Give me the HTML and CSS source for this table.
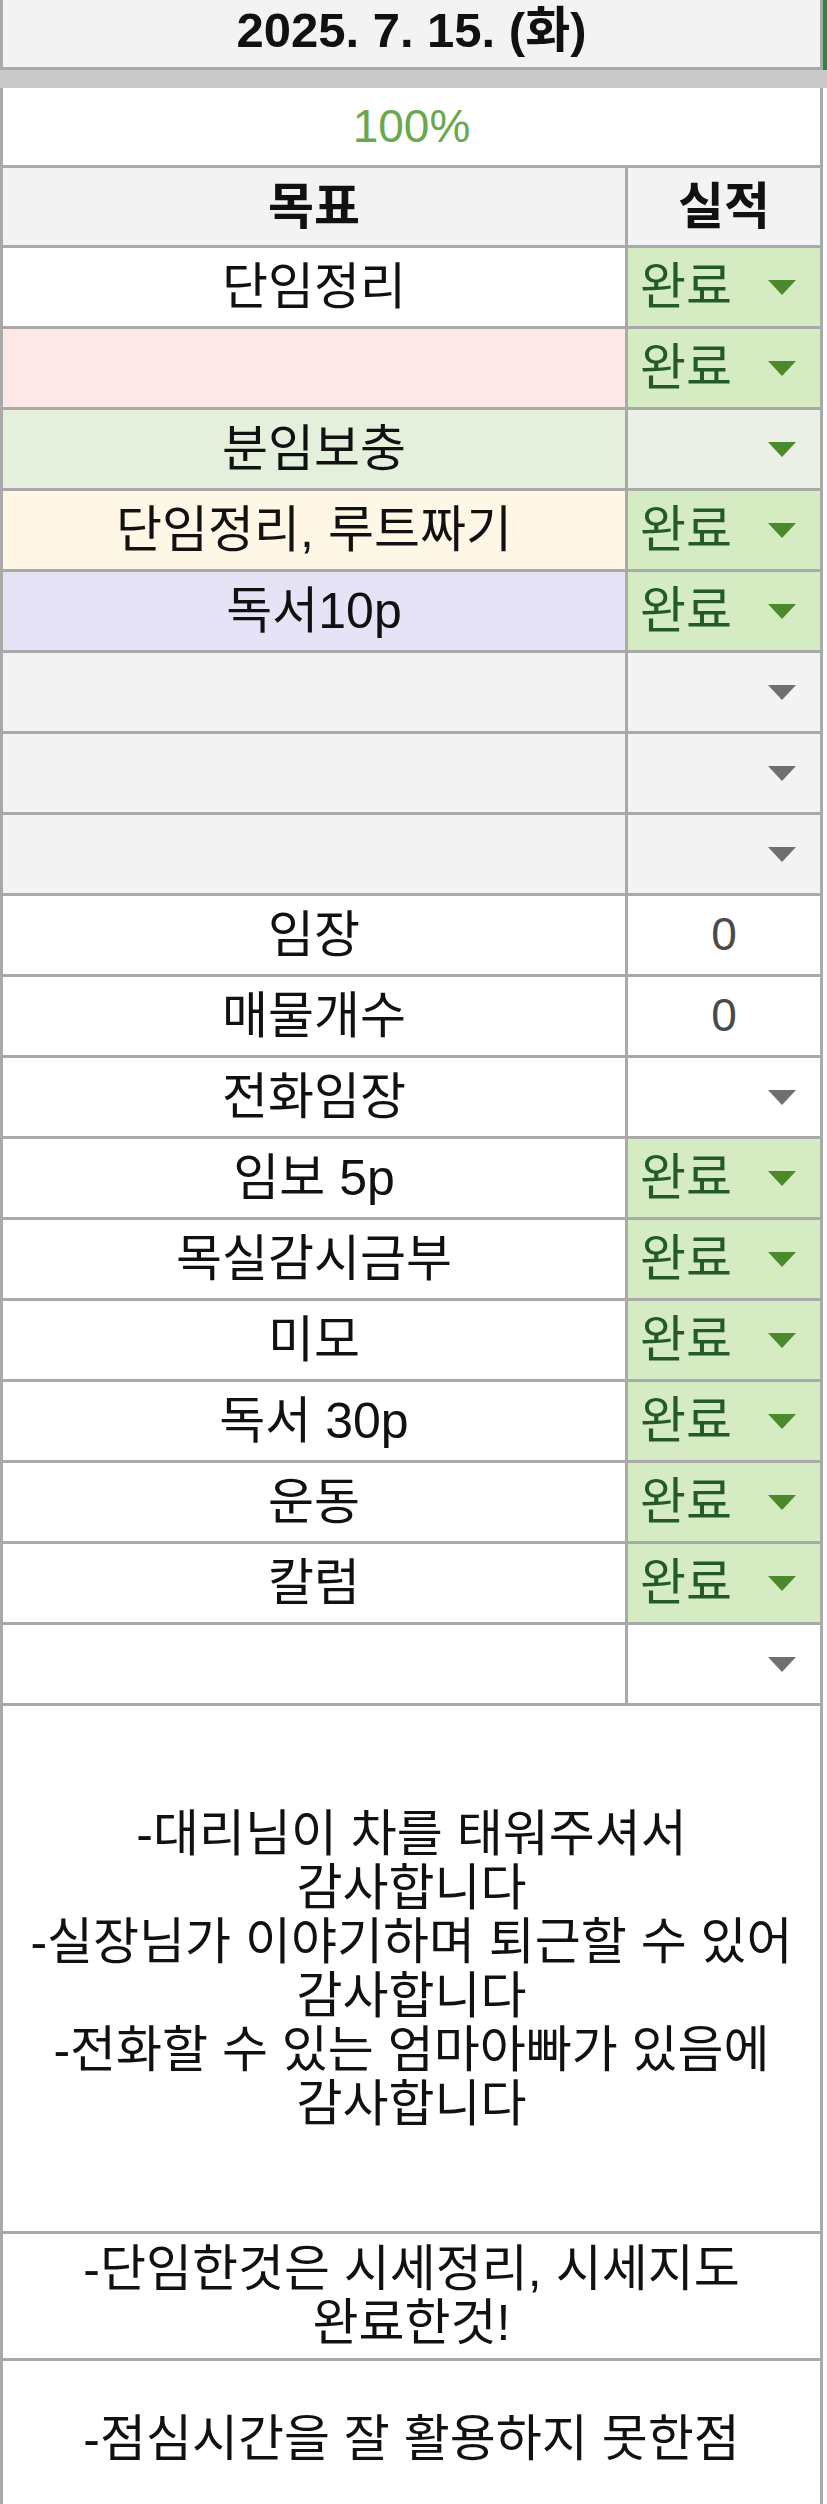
FILE: index.html
```html
<!DOCTYPE html>
<html lang="ko">
<head>
  <meta charset="UTF-8">
  <meta name="viewport" content="width=device-width, initial-scale=1.0">
  <title>일일 목표</title>
  <link rel="stylesheet" href="styles.css">
</head>
<body>
  <div class="sheet">
    <div class="date-bar">2025. 7. 15. (화)</div>
    <div class="band"></div>
    <div class="grid">
      <div class="cell wide rate">100%</div>

      <div class="cell head">목표</div>
      <div class="cell head">실적</div>

      <div class="cell">단임정리</div>
      <div class="cell pick done"><span>완료</span><i class="arrow"></i></div>

      <div class="cell pink"></div>
      <div class="cell pick done"><span>완료</span><i class="arrow"></i></div>

      <div class="cell mint">분임보충</div>
      <div class="cell pick mint-soft"><i class="arrow green"></i></div>

      <div class="cell cream">단임정리, 루트짜기</div>
      <div class="cell pick done"><span>완료</span><i class="arrow"></i></div>

      <div class="cell lilac">독서10p</div>
      <div class="cell pick done"><span>완료</span><i class="arrow"></i></div>

      <div class="cell grey"></div>
      <div class="cell pick grey"><i class="arrow"></i></div>

      <div class="cell grey"></div>
      <div class="cell pick grey"><i class="arrow"></i></div>

      <div class="cell grey"></div>
      <div class="cell pick grey"><i class="arrow"></i></div>

      <div class="cell">임장</div>
      <div class="cell num">0</div>

      <div class="cell">매물개수</div>
      <div class="cell num">0</div>

      <div class="cell">전화임장</div>
      <div class="cell pick"><i class="arrow"></i></div>

      <div class="cell">임보 5p</div>
      <div class="cell pick done"><span>완료</span><i class="arrow"></i></div>

      <div class="cell">목실감시금부</div>
      <div class="cell pick done"><span>완료</span><i class="arrow"></i></div>

      <div class="cell">미모</div>
      <div class="cell pick done"><span>완료</span><i class="arrow"></i></div>

      <div class="cell">독서 30p</div>
      <div class="cell pick done"><span>완료</span><i class="arrow"></i></div>

      <div class="cell">운동</div>
      <div class="cell pick done"><span>완료</span><i class="arrow"></i></div>

      <div class="cell">칼럼</div>
      <div class="cell pick done"><span>완료</span><i class="arrow"></i></div>

      <div class="cell"></div>
      <div class="cell pick"><i class="arrow"></i></div>

      <div class="cell wide note note-big">-대리님이 차를 태워주셔서<br>감사합니다<br>-실장님가 이야기하며 퇴근할 수 있어<br>감사합니다<br>-전화할 수 있는 엄마아빠가 있음에<br>감사합니다</div>
      <div class="cell wide note note-mid">-단임한것은 시세정리, 시세지도<br>완료한것!</div>
      <div class="cell wide note note-last">-점심시간을 잘 활용하지 못한점</div>
    </div>
  </div>
</body>
</html>
```

FILE: styles.css
```css
body {
  margin: 0;
  background: #fff;
  font-family: "Liberation Sans", "Noto Sans CJK KR", sans-serif;
  font-size: 50px;
  color: #111;
}
.sheet {
  width: 823px;
}
.date-bar {
  height: 61px;
  padding-bottom: 6px;
  display: flex;
  align-items: center;
  justify-content: center;
  background: #f3f3f3;
  border: 3px solid #a9a9a9;
  border-top: 0;
  font-size: 49px;
  font-weight: bold;
  line-height: 1;
  box-shadow: 4px 0 0 #1e8e3e;
}
.band {
  width: 827px;
  height: 18px;
  background: #cacaca;
}
.grid {
  display: grid;
  grid-template-columns: 622px 192px;
  gap: 3px;
  padding: 0 3px 3px;
  background: #a9a9a9;
}
.cell {
  height: 78px;
  display: flex;
  align-items: center;
  justify-content: center;
  background: #fff;
  line-height: 1.2;
  white-space: nowrap;
}
.wide {
  grid-column: 1 / -1;
}
.rate {
  height: 77px;
  font-size: 46px;
  color: #6aa84f;
}
.head {
  height: 77px;
  background: #f3f3f3;
  font-weight: bold;
}
.pick {
  justify-content: flex-start;
  padding: 0 24px 0 12px;
}
.pick .arrow {
  margin-left: auto;
  width: 0;
  height: 0;
  border-left: 14px solid transparent;
  border-right: 14px solid transparent;
  border-top: 15px solid #6f6f6f;
}
.done {
  background: #d5ecc3;
  color: #245a2a;
}
.done .arrow,
.pick .arrow.green {
  border-top-color: #4a8a2a;
}
.num {
  font-size: 46px;
  color: #4a4a4a;
}
.pink { background: #fde8e7; }
.mint { background: #e4efdc; }
.mint-soft { background: #eaf0e5; }
.cream { background: #fef7e5; }
.lilac { background: #e7e3f6; }
.grey { background: #f3f3f3; }
.note {
  text-align: center;
  line-height: 54px;
}
.note-big {
  height: 525px;
}
.note-mid {
  height: 124px;
}
.note-last {
  height: 156px;
}
```
